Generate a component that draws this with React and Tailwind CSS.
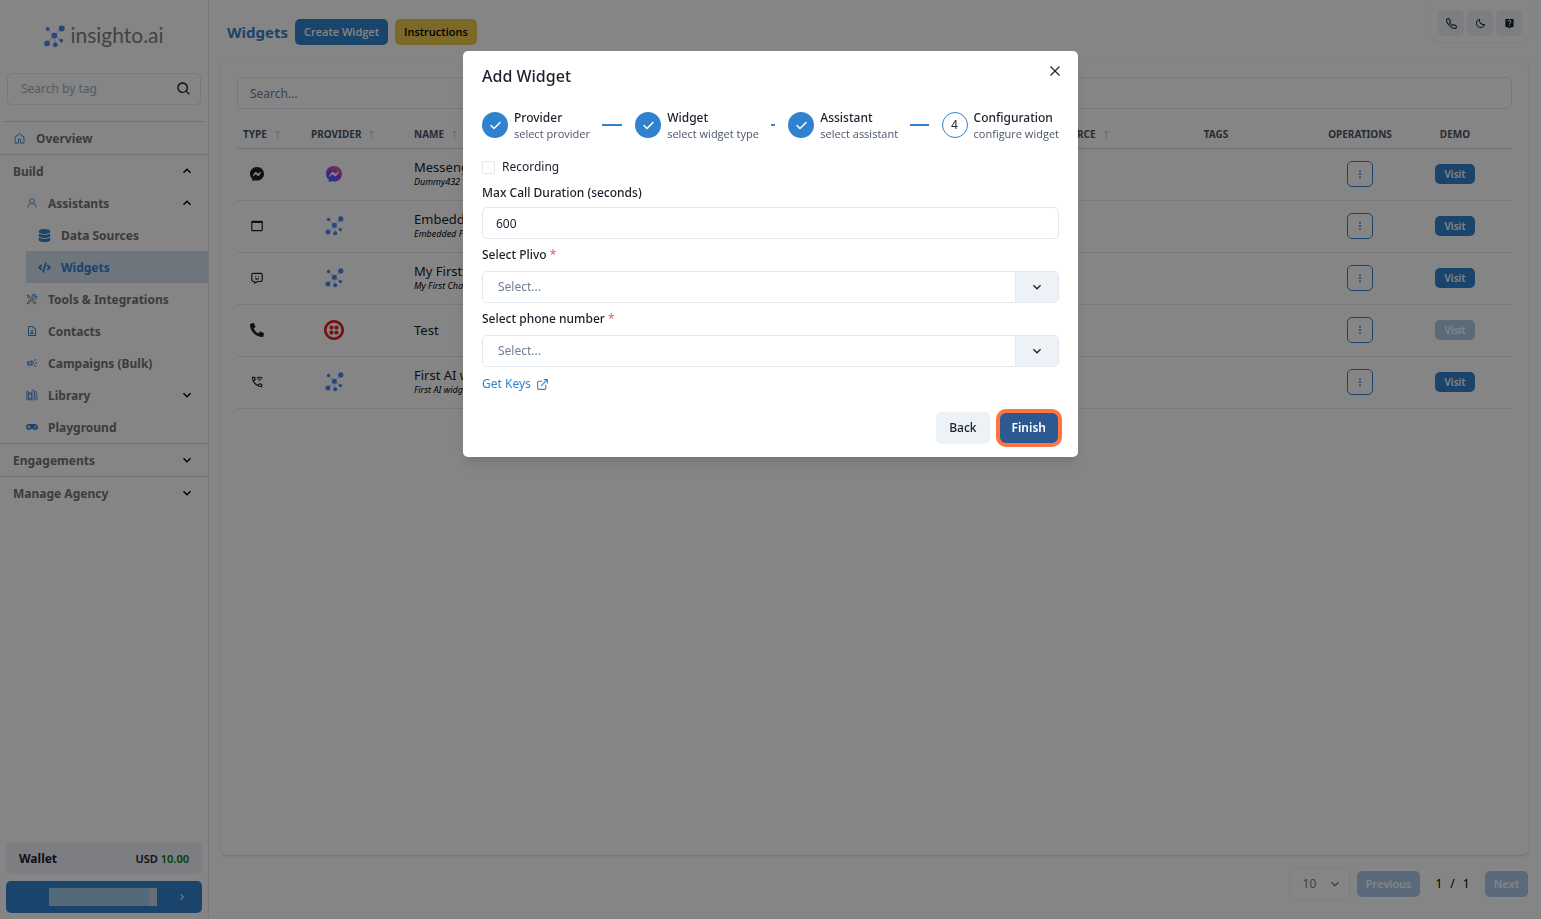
import React from "react";
import { BsTelephone, BsMessenger, BsArrowUp, BsThreeDotsVertical } from "react-icons/bs";
import { FaDatabase, FaCode, FaGamepad, FaPhoneAlt } from "react-icons/fa";
import { IoLibraryOutline } from "react-icons/io5";
import { MdLiveHelp, MdOutlineWifiCalling3, MdOutlineCampaign, MdOutlineContactPage } from "react-icons/md";
import { SiTwilio } from "react-icons/si";
import { BiMoon, BiWindow, BiSearch } from "react-icons/bi";
import { TbMessageChatbot } from "react-icons/tb";
import { GoHome, GoPerson } from "react-icons/go";
import { VscTools } from "react-icons/vsc";

function Chevron({ className = "", size = "size-4" }) {
  return (
    <svg viewBox="0 0 24 24" className={size + " " + className} fill="currentColor" aria-hidden="true">
      <path d="M16.59 8.59 12 13.17 7.41 8.59 6 10l6 6 6-6z" />
    </svg>
  );
}

function Nodes({ className = "" }) {
  return (
    <svg viewBox="0 0 21 23" className={className} aria-hidden="true">
      <g stroke="#8fb0f5" strokeWidth="0.8">
        <path d="M3.7 4 10.3 10.6 17.7 3.4M3 18.4 10.3 10.6 17.3 15.6M10.3 10.6 11.3 19.8" fill="none" />
      </g>
      <g fill="#4f86f7">
        <circle cx="3.7" cy="4" r="2" />
        <circle cx="17.7" cy="3.4" r="3" />
        <circle cx="10.3" cy="10.6" r="2.9" />
        <circle cx="3" cy="18.4" r="2.9" />
        <circle cx="17.3" cy="15.6" r="1.9" />
        <circle cx="11.3" cy="19.8" r="2.400" />
      </g>
    </svg>
  );
}

function MessengerColor() {
  return (
    <svg viewBox="0 0 16 16" className="size-4" aria-hidden="true">
      <defs>
        <linearGradient id="messenger" x1="0.2" y1="1" x2="0.8" y2="0">
          <stop offset="0" stopColor="#0a8cff" />
          <stop offset="0.5" stopColor="#a033ff" />
          <stop offset="1" stopColor="#ff6a68" />
        </linearGradient>
      </defs>
      <path
        fill="url(#messenger)"
        d="M8 0C3.5 0 0 3.3 0 7.8c0 2.3 1 4.4 2.5 5.8.1.1.2.3.2.4V15.500c.1.4.5.6.9.500l1.600-.7h.4c.7.2 1.500.3 2.400.3 4.500 0 8-3.300 8-7.800S12.500 0 8 0z"
      />
      <path fill="#fff" d="M3.200 10 5.600 6.300c.4-.6 1.200-.7 1.700-.3l1.900 1.400c.2.1.4.1.6 0l2.500-1.900c.3-.3.8.1.500.500L10.400 9.700c-.4.6-1.200.7-1.700.3L6.800 8.600c-.2-.1-.4-.1-.6 0l-2.500 1.900c-.3.3-.7-.1-.5-.5z" />
    </svg>
  );
}

function NavItem({ icon: Icon, label, indent, chevron, active, size = "size-3" }) {
  return (
    <li className={indent === 2 ? "pl-[26px]" : ""}>
      <a
        href="#"
        aria-current={active ? "page" : undefined}
        className={
          "flex h-8 items-center gap-[10px] pr-[13px] text-[12px] font-bold " +
          (indent === 2 ? "pl-3 " : indent === 1 ? "pl-[26px] " : "pl-[13px] ") +
          (active ? "bg-[#d3e0f0] text-[#3182ce]" : "text-[#747474]")
        }
      >
        {Icon && <Icon className={"shrink-0 text-[#3182ce] " + size} />}
        <span className="flex-1 pt-[2px]">{label}</span>
        {chevron && <Chevron className={"text-black " + (chevron === "up" ? "rotate-180" : "")} />}
      </a>
    </li>
  );
}

function Sidebar() {
  return (
    <aside className="flex w-[209px] shrink-0 flex-col border-r border-[#e4e7ec]">
      <div className="flex h-[73px] items-center justify-center gap-[5px]">
        <Nodes className="h-[23px] w-[21px]" />
        <span className="pb-1 font-['Lato','Noto_Sans',sans-serif] text-[21px] leading-6 text-[#808080]">insighto.ai</span>
      </div>
      <label className="mx-[7px] flex h-8 items-center rounded-[5px] border border-[#e2e8f0] pr-2 pl-[13px]">
        <input
          aria-label="Search by tag"
          placeholder="Search by tag"
          className="min-w-0 flex-1 text-[12px] outline-none placeholder:text-[#a0aec0]"
        />
        <BiSearch className="size-4 text-[#1a202c]" />
      </label>
      <nav className="mt-4">
        <div className="mx-[3px] border-t border-[#d5dbe3]" />
        <ul className="border-b border-[#d5dbe3]">
          <NavItem icon={GoHome} label="Overview" size="size-[13px]" />
        </ul>
        <ul className="border-b border-[#d5dbe3]">
          <NavItem label="Build" chevron="up" />
          <NavItem icon={GoPerson} label="Assistants" indent={1} chevron="up" />
          <NavItem icon={FaDatabase} label="Data Sources" indent={2} size="size-[13px]" />
          <NavItem icon={FaCode} label="Widgets" indent={2} active size="size-[13px]" />
          <NavItem icon={VscTools} label="Tools & Integrations" indent={1} />
          <NavItem icon={MdOutlineContactPage} label="Contacts" indent={1} />
          <NavItem icon={MdOutlineCampaign} label="Campaigns (Bulk)" indent={1} />
          <NavItem icon={IoLibraryOutline} label="Library" indent={1} chevron="down" />
          <NavItem icon={FaGamepad} label="Playground" indent={1} />
        </ul>
        <ul className="border-b border-[#d5dbe3]">
          <NavItem label="Engagements" chevron="down" />
        </ul>
        <ul>
          <NavItem label="Manage Agency" chevron="down" />
        </ul>
      </nav>
      <div className="mt-auto flex flex-col gap-[7px] px-[6px] pb-[6px]">
        <div className="flex h-8 items-center justify-between rounded-[5px] bg-[#edf2f7] px-[13px] pt-[2px] font-semibold text-[#1a202c]">
          <span className="text-[12px] font-bold">Wallet</span>
          <span className="text-[11px]">
            USD <span className="text-[#008000]">10.00</span>
          </span>
        </div>
        <button aria-label="Account" className="flex h-8 items-center justify-end rounded-[5px] bg-[#3182ce] pr-[14px] text-white">
          <span className="flex h-[18px] w-[108px]">
            <span className="flex-1 bg-[#a4cbe8]" />
            <span className="w-2 bg-[#c3d4ea]" />
          </span>
          <Chevron className="ml-[19px] -rotate-90" size="size-3" />
        </button>
      </div>
    </aside>
  );
}

const rows = [
  { type: <BsMessenger className="size-[14px]" />, provider: <MessengerColor />, name: "Messenger Widget", sub: "Dummy432" },
  { type: <BiWindow className="size-[14px]" />, provider: <Nodes className="h-5 w-[19px]" />, name: "Embedded Form", sub: "Embedded Form widget" },
  { type: <TbMessageChatbot className="size-[14px]" />, provider: <Nodes className="h-5 w-[19px]" />, name: "My First Chatbot", sub: "My First Chatbot widget" },
  { type: <FaPhoneAlt className="size-[14px]" />, provider: <SiTwilio className="size-5 text-[#e31e26]" />, name: "Test", disabled: true },
  { type: <MdOutlineWifiCalling3 className="size-[14px]" />, provider: <Nodes className="h-5 w-[19px]" />, name: "First AI widget", sub: "First AI widget for calls" },
];

const columns = [
  { label: "Type", sort: true, width: "w-[68px]" },
  { label: "Provider", sort: true, width: "w-[103px]" },
  { label: "Name", sort: true, width: "" },
  { label: "Data Source", sort: true, width: "w-[88px]" },
  { label: "Tags", width: "w-[212px]" },
  { label: "Operations", width: "w-[76px]" },
  { label: "Demo", width: "w-[114px]" },
];

function WidgetTable() {
  return (
    <table className="mt-3 w-full table-fixed border-collapse text-[#1a202c]">
      <thead>
        <tr className="h-[27px] border-b border-[#cbd5e0]">
          {columns.map((c) => (
            <th
              key={c.label}
              className={"px-[6px] text-[10px] font-bold whitespace-nowrap text-[#4a5568] uppercase " + c.width}
            >
              <span className={"flex items-center " + (c.sort ? "gap-[6px]" : "justify-center")}>
                {c.label}
                {c.sort && <BsArrowUp className="size-[9px] shrink-0 text-[#a0aec0]" />}
              </span>
            </th>
          ))}
        </tr>
      </thead>
      <tbody>
        {rows.map((r) => (
          <tr key={r.name} className="h-[52px] border-b border-[#e2e8f0]">
            <td className="px-[6px]">
              <span className="flex w-7 justify-center">{r.type}</span>
            </td>
            <td className="px-[6px]">
              <span className="flex w-[46px] justify-center">{r.provider}</span>
            </td>
            <td className="px-[6px]">
              <div className="text-[13px] leading-4">{r.name}</div>
              {r.sub && <div className="text-[9px] leading-[14px] text-black italic">{r.sub}</div>}
            </td>
            <td />
            <td />
            <td>
              <button
                aria-label={"Operations for " + r.name}
                className="mx-auto flex size-[26px] items-center justify-center rounded-[5px] border border-[#3182ce] text-[#3182ce]"
              >
                <BsThreeDotsVertical className="size-[10px]" />
              </button>
            </td>
            <td>
              <button
                disabled={r.disabled}
                className="mx-auto block h-5 w-10 rounded-[5px] bg-[#3182ce] text-[10px] font-semibold text-white disabled:opacity-40"
              >
                Visit
              </button>
            </td>
          </tr>
        ))}
      </tbody>
    </table>
  );
}

function Main() {
  const tool = "flex size-[26px] items-center justify-center rounded-[5px] bg-[#edf2f7] text-[#1a202c]";
  const small = "h-[26px] rounded-[5px] px-[9px] font-['Open_Sans','Noto_Sans',sans-serif] text-[11px] font-semibold";
  return (
    <main className="flex min-w-0 flex-1 flex-col pr-[13px] pl-3">
      <header className="flex h-[61px] items-start">
        <div className="mt-[19px] ml-[6px] flex items-center gap-[7px]">
          <h1 className="text-[15px] leading-6 font-bold text-[#3182ce]">Widgets</h1>
          <button className={small + " bg-[#3182ce] text-white"}>Create Widget</button>
          <button className={small + " bg-[#ecc94b] text-black"}>Instructions</button>
        </div>
        <div className="ml-auto flex h-[42px] gap-[3px] rounded-b-[6px] px-[6px] pt-[10px] shadow-[0_1px_2px_rgba(0,0,0,0.06)]">
          <button aria-label="Call" className={tool}><BsTelephone className="size-[11px] stroke-current stroke-[0.5px]" /></button>
          <button aria-label="Dark mode" className={tool}><BiMoon className="size-[11px]" /></button>
          <button aria-label="Help" className={tool}><MdLiveHelp className="size-[11px]" /></button>
        </div>
      </header>
      <section className="flex-1 rounded-[6px] px-4 pt-4 shadow-[0_1px_3px_rgba(0,0,0,0.1),0_1px_2px_rgba(0,0,0,0.06)]">
        <input
          aria-label="Search widgets"
          placeholder="Search..."
          className="block h-8 w-full rounded-[5px] border border-[#e2e8f0] px-3 text-[12px] outline-none placeholder:text-[#718096]"
        />
        <WidgetTable />
      </section>
      <footer className="flex items-center justify-end gap-[7px] pt-[13px] pb-[19px]">
        <div className="relative flex items-center text-[#808080]">
          <select
            aria-label="Rows per page"
            className="h-8 w-[61px] appearance-none rounded-[5px] border border-[#f0f2f5] pl-[13px] text-[12px]"
          >
            <option>10</option>
          </select>
          <Chevron className="pointer-events-none absolute right-[7px]" />
        </div>
        <button disabled className={small + " bg-[#3182ce] text-white opacity-40"}>Previous</button>
        <span className="flex gap-2 px-2 text-[12px] text-black">
          <span>1</span>
          <span>/</span>
          <span>1</span>
        </span>
        <button disabled className={small + " bg-[#3182ce] text-white opacity-40"}>Next</button>
      </footer>
    </main>
  );
}

const steps = [
  { title: "Provider", text: "select provider", done: true },
  { title: "Widget", text: "select widget type", done: true },
  { title: "Assistant", text: "select assistant", done: true },
  { title: "Configuration", text: "configure widget" },
];

function Stepper() {
  return (
    <ol className="flex gap-[13px]">
      {steps.map((s, i) => (
        <li key={s.title} className={"flex items-center " + (i < 3 ? "flex-1 basis-0" : "shrink-0")}>
          {s.done ? (
            <span className="flex size-[26px] shrink-0 items-center justify-center rounded-full bg-[#3182ce] text-white">
              <svg viewBox="0 0 20 20" className="size-[15px]" fill="currentColor" aria-hidden="true">
                <path d="M16.700 5.300a1 1 0 0 1 0 1.400l-8 8a1 1 0 0 1-1.400 0l-4-4a1 1 0 0 1 1.400-1.400L8 12.600l7.300-7.300a1 1 0 0 1 1.400 0z" />
              </svg>
            </span>
          ) : (
            <span className="flex size-[26px] shrink-0 items-center justify-center rounded-full border border-[#3182ce] text-[12px] text-[#1a202c]">
              {i + 1}
            </span>
          )}
          <div className="ml-[6px] shrink-0 whitespace-nowrap">
            <h3 className="text-[12px] leading-[18px] font-medium text-[#1a202c]">{s.title}</h3>
            <p className="font-['Open_Sans','Noto_Sans',sans-serif] text-[11px] leading-[14px] text-[#4a5568]">{s.text}</p>
          </div>
          {i < 3 && <span className="ml-3 h-[2px] flex-1 bg-[#3182ce]" />}
        </li>
      ))}
    </ol>
  );
}

function SelectField({ id, label }) {
  return (
    <div>
      <label htmlFor={id} className="block h-8 text-[12px] leading-8 font-medium">
        {label} <span className="text-[#f56565]">*</span>
      </label>
      <div className="relative flex h-8 items-stretch overflow-hidden rounded-[5px] border border-[#e2e8f0]">
        <select id={id} className="min-w-0 flex-1 appearance-none bg-white pl-[15px] text-[12px] text-[#718096] outline-none">
          <option>Select...</option>
        </select>
        <span className="pointer-events-none flex w-[43px] items-center justify-center border-l border-[#e2e8f0] bg-[#edf2f7]">
          <Chevron />
        </span>
      </div>
    </div>
  );
}

function AddWidgetDialog() {
  return (
    <div className="fixed inset-0 flex items-start justify-center bg-black/[0.48] pt-[51px]">
      <div
        role="dialog"
        aria-modal="true"
        aria-labelledby="dialog-title"
        className="relative w-[615px] max-w-full rounded-[5px] bg-white px-[19px] pb-[13px] text-[#1a202c] shadow-[0_10px_15px_-3px_rgba(0,0,0,0.1),0_4px_6px_-2px_rgba(0,0,0,0.05)]"
      >
        <h2 id="dialog-title" className="pt-[13px] text-[16px] leading-6 font-medium">Add Widget</h2>
        <button aria-label="Close" className="absolute top-[7px] right-[10px] flex size-[26px] items-center justify-center">
          <svg viewBox="0 0 10 10" className="size-[10px]" stroke="currentColor" strokeWidth="1.2" fill="none" aria-hidden="true">
            <path d="M.5.5l9 9M9.500.5l-9 9" />
          </svg>
        </button>
        <div className="pt-[21px]">
          <Stepper />
        </div>
        <label className="mt-[14px] flex h-6 items-center gap-[7px] text-[12px]">
          <input type="checkbox" className="size-[13px] appearance-none rounded-[1px] border border-[#e2e8f0]" />
          Recording
        </label>
        <label htmlFor="duration" className="block h-7 text-[12px] leading-7 font-medium">
          Max Call Duration (seconds)
        </label>
        <input
          id="duration"
          defaultValue="600"
          className="block h-8 w-full rounded-[5px] border border-[#e2e8f0] px-[13px] text-[12px] outline-none"
        />
        <SelectField id="plivo" label="Select Plivo" />
        <SelectField id="phone" label="Select phone number" />
        <a href="#" className="mt-2 flex h-[18px] items-center gap-[5px] text-[12px] text-[#3182ce]">
          Get Keys
          <svg viewBox="0 0 24 24" className="size-[13px]" fill="none" stroke="currentColor" strokeWidth="2" strokeLinecap="round" aria-hidden="true">
            <path d="M15 3h6v6M10 14 20.500 3.500M18 13v6a2 2 0 0 1-2 2H5a2 2 0 0 1-2-2V8c0-1.100.9-2 2-2h6" />
          </svg>
        </a>
        <div className="mt-[19px] flex items-center justify-end gap-[10px]">
          <button className="h-8 rounded-[5px] bg-[#edf2f7] px-[13px] text-[12px] font-medium">Back</button>
          <button className="mr-[1px] h-[30px] rounded-[6px] bg-[#2c5a90] px-[12px] text-[12px] font-semibold text-white ring-4 ring-[#ff7442]">
            Finish
          </button>
        </div>
      </div>
    </div>
  );
}

export default function App() {
  return (
    <div className="flex min-h-screen bg-white font-['Noto_Sans','Open_Sans',sans-serif]">
      <Sidebar />
      <Main />
      <AddWidgetDialog />
    </div>
  );
}
